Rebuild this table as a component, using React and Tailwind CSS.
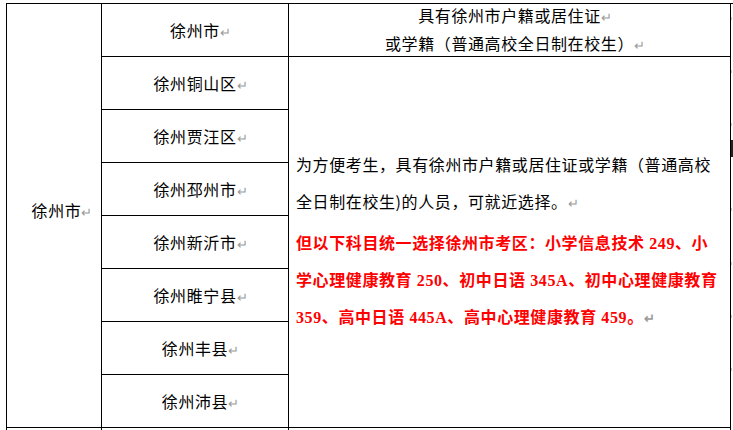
const cjk = { fontFamily: '"Noto Sans CJK SC", sans-serif' }
const red = { fontFamily: '"Liberation Serif", "Noto Sans CJK SC", serif' }

function Mark() {
  return <span className="inline-block w-0 text-[13px] text-[#9a9a9a] tracking-normal">↵</span>
}

const districts = ['徐州铜山区', '徐州贾汪区', '徐州邳州市', '徐州新沂市', '徐州睢宁县', '徐州丰县', '徐州沛县']

export default function App() {
  return (
    <div className="relative w-[733px] h-[430px] overflow-hidden bg-white pt-[3px] pl-[6px] text-black" style={cjk}>
      <div className="grid grid-cols-[95px_187px_442px] grid-rows-[repeat(8,53px)] border-t border-l border-black text-[16px] tracking-[0.6px]">
        {/* city column */}
        <div className="row-span-8 flex items-center justify-center border-r border-b border-black pl-[5px] pb-[12px]">
          <span>徐州市<Mark /></span>
        </div>

        {/* first row */}
        <div className="flex items-center justify-center border-r border-b border-black">
          <span>徐州市<Mark /></span>
        </div>
        <div className="flex flex-col items-center justify-center border-r border-b border-black leading-[27px] whitespace-nowrap">
          <span>具有徐州市户籍或居住证<Mark /></span>
          <span>或学籍（普通高校全日制在校生）<Mark /></span>
        </div>

        {districts.map((d, i) => (
          <div key={d} className="col-start-2 flex items-center justify-center border-r border-b border-black" style={{ gridRowStart: i + 2 }}>
            <span>{d}<Mark /></span>
          </div>
        ))}

        {/* merged note cell */}
        <div className="col-start-3 row-start-2 row-span-7 border-r border-b border-black pl-[7px] pt-[89px] leading-[37px] whitespace-nowrap">
          <p>为方便考生，具有徐州市户籍或居住证或学籍（普通高校</p>
          <p>全日制在校生)的人员，可就近选择。<Mark /></p>
          <p className="mt-[4px] font-bold text-[#ff0000]" style={red}>
            但以下科目统一选择徐州市考区：小学信息技术 249、小<br />
            学心理健康教育 250、初中日语 345A、初中心理健康教育<br />
            359、高中日语 445A、高中心理健康教育 459。<Mark />
          </p>
        </div>
      </div>

      {/* start of the next row */}
      <div className="grid grid-cols-[95px_187px_442px] h-[20px] border-l border-black">
        <div className="border-r border-black" />
        <div className="border-r border-black" />
        <div className="border-r border-black" />
      </div>

      {/* end-of-row marks on the right edge */}
      {[17, 70, 123, 208, 262, 315, 368].map(y => (
        <div key={y} className="absolute left-[731px] w-px h-[3px] bg-[#c8c8c8]" style={{ top: y }} />
      ))}
      <div className="absolute left-[731px] top-[140px] w-[2px] h-[17px] bg-[#222]" />
    </div>
  )
}
